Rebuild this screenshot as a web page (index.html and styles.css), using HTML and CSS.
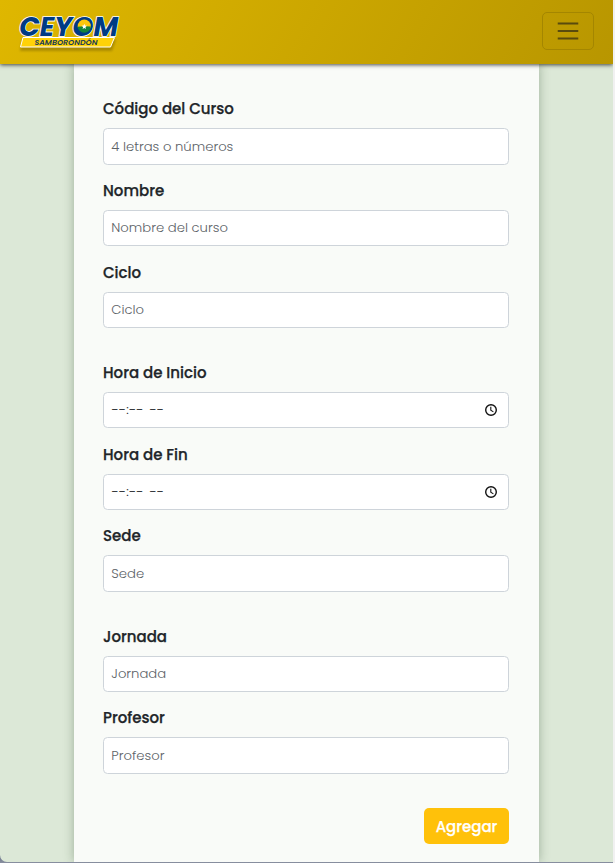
FILE: index.html
```
<!DOCTYPE html>
<html lang="es">
<head>
<meta charset="utf-8">
<meta name="viewport" content="width=device-width, initial-scale=1">
<title>CEYOM Samborondón</title>
<link rel="stylesheet" href="styles.css">
</head>
<body>
<div class="page">
  <header class="navbar">
    <svg class="logo" viewBox="0 0 106 40" role="img" aria-label="CEYOM Samborondón">
      <defs>
        <clipPath id="sun"><circle cx="67.3" cy="14.2" r="6.6"/></clipPath>
      </defs>
      <path class="logo-shadow" d="M5 27.5h94l-4 11.5H3z"/>
      <path class="logo-plate" d="M6 25.5h91.5l-4 9.5h-90z"/>
      <text class="logo-name" x="2.2" y="23.8" textLength="99" lengthAdjust="spacingAndGlyphs">CEYOM</text>
      <circle class="logo-ring" cx="67.3" cy="14.2" r="8.2"/>
      <g clip-path="url(#sun)">
        <path fill="#fbc70d" d="M58 6h20v10H58z"/>
        <path fill="#12843c" d="M58 15.2q9.5-2 20 0v9H58z"/>
      </g>
      <path fill="#fff" d="M67.3 11.8l.7 1.8 2 .1-1.5 1.3.5 2-1.7-1.1-1.7 1.1.5-2-1.5-1.3 2-.1z"/>
      <text class="logo-place" x="17.5" y="33" textLength="63" lengthAdjust="spacingAndGlyphs">SAMBORONDÓN</text>
    </svg>
    <button class="toggler" type="button" aria-label="Menú">
      <svg viewBox="0 0 30 30" width="28" height="28"><path d="M4 7h22M4 15h22M4 23h22"/></svg>
    </button>
  </header>
  <main class="card">
    <form class="form">
      <section class="section">
        <div class="field"><label class="label" for="codigo">Código del Curso</label><input class="input" id="codigo" placeholder="4 letras o números"></div>
        <div class="field"><label class="label" for="nombre">Nombre</label><input class="input" id="nombre" placeholder="Nombre del curso"></div>
        <div class="field"><label class="label" for="ciclo">Ciclo</label><input class="input" id="ciclo" placeholder="Ciclo"></div>
      </section>
      <section class="section">
        <div class="field"><span class="label">Hora de Inicio</span>
          <div class="input time"><span class="time-text">--<i>:</i>--<b></b>--</span><svg class="clock" viewBox="0 0 14 14"><circle cx="7" cy="7" r="5.3"/><path d="M6.8 3.8v3.5l2.6 1.6"/></svg></div></div>
        <div class="field"><span class="label">Hora de Fin</span>
          <div class="input time"><span class="time-text">--<i>:</i>--<b></b>--</span><svg class="clock" viewBox="0 0 14 14"><circle cx="7" cy="7" r="5.3"/><path d="M6.8 3.8v3.5l2.6 1.6"/></svg></div></div>
        <div class="field"><label class="label" for="sede">Sede</label><input class="input" id="sede" placeholder="Sede"></div>
      </section>
      <section class="section">
        <div class="field"><label class="label" for="jornada">Jornada</label><input class="input" id="jornada" placeholder="Jornada"></div>
        <div class="field"><label class="label" for="profesor">Profesor</label><input class="input" id="profesor" placeholder="Profesor"></div>
      </section>
      <div class="actions"><button class="submit" type="button">Agregar</button></div>
    </form>
  </main>
</div>
</body>
</html>
```
FILE: styles.css
```
* { box-sizing: border-box; }
html { background: #f1f1f1; }
body {
  margin: 0;
  height: 863px;
  overflow: hidden;
  font-family: Poppins, Inter, "Open Sans", sans-serif;
  color: #212529;
  background: linear-gradient(#666e86, #8990a0) 0 100% / 613px 8px no-repeat;
}
.page {
  display: flex;
  flex-direction: column;
  width: 613px;
  height: 862px;
  overflow: hidden;
  background: #dce8d7;
  border-bottom-left-radius: 7px;
}
.navbar {
  position: relative;
  z-index: 1;
  display: flex;
  flex: none;
  align-items: center;
  justify-content: space-between;
  height: 64px;
  padding: 0 19px 2px 17px;
  background: linear-gradient(120deg, #dfb700, #b89600);
  box-shadow: 0 1px 4px rgba(0, 0, 0, .7);
}
.logo { width: 106px; height: 40px; margin-top: 2px; overflow: visible; }
.logo-shadow { fill: rgba(70, 55, 0, .3); filter: blur(1px); }
.logo-plate { fill: #ffd208; stroke: #fff; stroke-width: 1; }
.logo-name {
  font: italic 700 27px Poppins, Inter, sans-serif;
  fill: #003b84;
  stroke: #fff;
  stroke-width: 1.6px;
  paint-order: stroke;
}
.logo-ring { fill: #003b84; }
.logo-place { font: italic 600 7.5px Poppins, Inter, sans-serif; fill: #173b57; }
.toggler {
  display: flex;
  align-items: center;
  justify-content: center;
  width: 52px;
  height: 38px;
  padding: 0;
  background: none;
  border: 1px solid #a48600;
  border-radius: 5px;
}
.toggler path { fill: none; stroke: #594b0d; stroke-width: 2; }
.card {
  flex: 1;
  width: 465px;
  margin-left: 74px;
  padding: 33.1px 30px 0 29px;
  background: #f9fbf8;
  box-shadow: 0 0 10px rgba(40, 70, 40, .35);
}
.section { margin-bottom: 18.75px; }
.field { height: 81.65px; }
.label {
  display: block;
  height: 24px;
  margin-bottom: 7.2px;
  padding-top: .35px;
  font-size: 15px;
  font-weight: 500;
  line-height: 24px;
  -webkit-text-stroke: .25px currentColor;
}
.input {
  display: flex;
  align-items: center;
  width: 100%;
  height: 36.5px;
  padding: .4px 7.3px 0;
  font: 300 13.2px Poppins, Inter, "Open Sans", sans-serif;
  color: #212529;
  background: #fff;
  border: 1px solid #ced4da;
  border-radius: 4.5px;
}
.input::placeholder { color: #5c6267; opacity: 1; }
.time { justify-content: space-between; padding-right: 10px; }
.time-text { margin-left: .5px; white-space: nowrap; letter-spacing: .4px; -webkit-text-stroke: .1px currentColor; }
.time-text i { font-style: normal; }
.time-text b { display: inline-block; width: 6px; }
.clock { width: 14px; height: 14px; fill: none; stroke: #111; stroke-width: 1.4; }
.clock path { stroke-width: 1.1; }
.actions { display: flex; justify-content: flex-end; margin-top: 4px; }
.form .section:nth-last-of-type(1) { margin-bottom: 0; }
.actions { padding-top: 18.75px; margin-top: 1.9px; }
.submit {
  width: 85px;
  height: 36px;
  padding: 0;
  font: 500 15px Poppins, Inter, "Open Sans", sans-serif;
  -webkit-text-stroke: .25px currentColor;
  color: #fff;
  background: #ffc10a;
  border: 0;
  border-radius: 5px;
}
```
